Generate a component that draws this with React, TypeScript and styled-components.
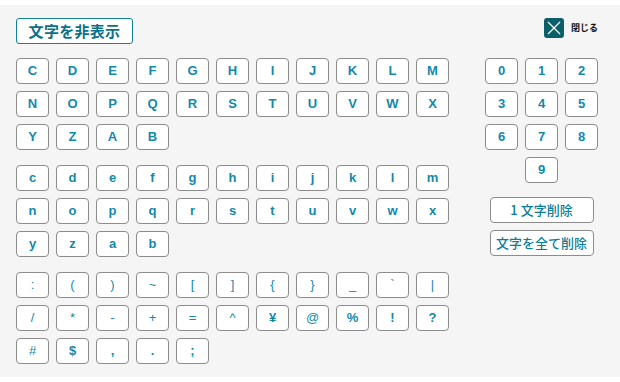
import styled, { createGlobalStyle } from 'styled-components';

const GlobalStyle = createGlobalStyle`
  html, body {
    margin: 0;
    padding: 0;
    background: #ffffff;
  }
  body {
    font-family: "Liberation Sans", "Noto Sans CJK JP", sans-serif;
  }
`;

const Page = styled.div`
  padding-top: 5px;
  width: 620px;
`;

const Panel = styled.div`
  box-sizing: border-box;
  height: 372px;
  background: #f5f5f5;
  padding: 13px 22px 0 16px;
  display: flex;
  flex-direction: column;
`;

const Header = styled.div`
  display: flex;
  align-items: flex-start;
  justify-content: space-between;
  height: 26px;
  margin-bottom: 14px;
`;

const HideButton = styled.button`
  box-sizing: border-box;
  height: 26px;
  width: 117px;
  padding: 0;
  background: #ffffff;
  border: 1px solid #138297;
  border-radius: 3px;
  color: #0b7187;
  font-family: "Noto Sans CJK JP", sans-serif;
  font-weight: 700;
  font-size: 15px;
  line-height: 24px;
  letter-spacing: 0.3px;
`;

const CloseWrap = styled.div`
  display: flex;
  align-items: center;
  gap: 7px;
  margin-right: 0;
`;

const CloseBox = styled.div`
  width: 20px;
  height: 20px;
  border-radius: 3px;
  background: #0a5f6b;
  display: flex;
  align-items: center;
  justify-content: center;
`;

const CloseLabel = styled.span`
  font-family: "Noto Sans CJK JP", sans-serif;
  font-weight: 700;
  font-size: 9px;
  color: #111111;
  margin-top: -2px;
`;

const Body = styled.div`
  display: flex;
  justify-content: space-between;
`;

const Keyboard = styled.div`
  display: flex;
  flex-direction: column;
  gap: 15px;
`;

const KeyGroup = styled.div<{ $cols: number }>`
  display: grid;
  grid-template-columns: repeat(${p => p.$cols}, 33px);
  grid-auto-rows: 26px;
  column-gap: 7px;
  row-gap: 7px;
`;

const Key = styled.button<{ $light?: boolean }>`
  box-sizing: border-box;
  width: 33px;
  height: 26px;
  padding: 0;
  background: #ffffff;
  border: 1px solid #8c8c8c;
  border-radius: 4px;
  color: #1289aa;
  font-family: "Liberation Sans", Arial, sans-serif;
  font-weight: ${p => (p.$light ? 400 : 700)};
  font-size: 13px;
  line-height: 24px;
`;

const Side = styled.div`
  width: 113px;
  display: flex;
  flex-direction: column;
  align-items: center;
`;

const NumGrid = styled(KeyGroup)`
  margin-bottom: 14px;
`;

const NineKey = styled(Key)`
  grid-column: 2;
`;

const ActionButton = styled(Key)`
  width: 104px;
  font-family: "Noto Sans CJK JP", sans-serif;
  font-size: 13px;
  font-weight: 500;
  color: #0c7e98;
  & + & {
    margin-top: 7px;
  }
`;

const upper = ['C', 'D', 'E', 'F', 'G', 'H', 'I', 'J', 'K', 'L', 'M', 'N', 'O', 'P', 'Q', 'R', 'S', 'T', 'U', 'V', 'W', 'X', 'Y', 'Z', 'A', 'B'];
const lower = upper.map(c => c.toLowerCase());
const symbols: [string, boolean][] = [
  [':', true], ['(', true], [')', true], ['~', true], ['[', true], [']', true], ['{', true], ['}', true], ['_', true], ['`', true], ['|', true],
  ['/', true], ['*', true], ['-', true], ['+', true], ['=', true], ['^', true], ['¥', false], ['@', true], ['%', false], ['!', false], ['?', false],
  ['#', true], ['$', false], [',', false], ['.', false], [';', false]
];

const App = () => (
  <>
    <GlobalStyle />
    <Page>
      <Panel>
        <Header>
          <HideButton>文字を非表示</HideButton>
          <CloseWrap>
            <CloseBox>
              <svg width="14" height="14" viewBox="0 0 14 14">
                <path d="M1 1L13 13M13 1L1 13" stroke="#ffffff" strokeWidth="1.2" fill="none" />
              </svg>
            </CloseBox>
            <CloseLabel>閉じる</CloseLabel>
          </CloseWrap>
        </Header>
        <Body>
          <Keyboard>
            <KeyGroup $cols={11}>
              {upper.map(c => (
                <Key key={c}>{c}</Key>
              ))}
            </KeyGroup>
            <KeyGroup $cols={11}>
              {lower.map(c => (
                <Key key={c}>{c}</Key>
              ))}
            </KeyGroup>
            <KeyGroup $cols={11}>
              {symbols.map(([c, light]) => (
                <Key key={c} $light={light}>
                  {c}
                </Key>
              ))}
            </KeyGroup>
          </Keyboard>
          <Side>
            <NumGrid $cols={3}>
              {['0', '1', '2', '3', '4', '5', '6', '7', '8'].map(n => (
                <Key key={n}>{n}</Key>
              ))}
              <NineKey>9</NineKey>
            </NumGrid>
            <ActionButton>1 文字削除</ActionButton>
            <ActionButton>文字を全て削除</ActionButton>
          </Side>
        </Body>
      </Panel>
    </Page>
  </>
);

export default App;
